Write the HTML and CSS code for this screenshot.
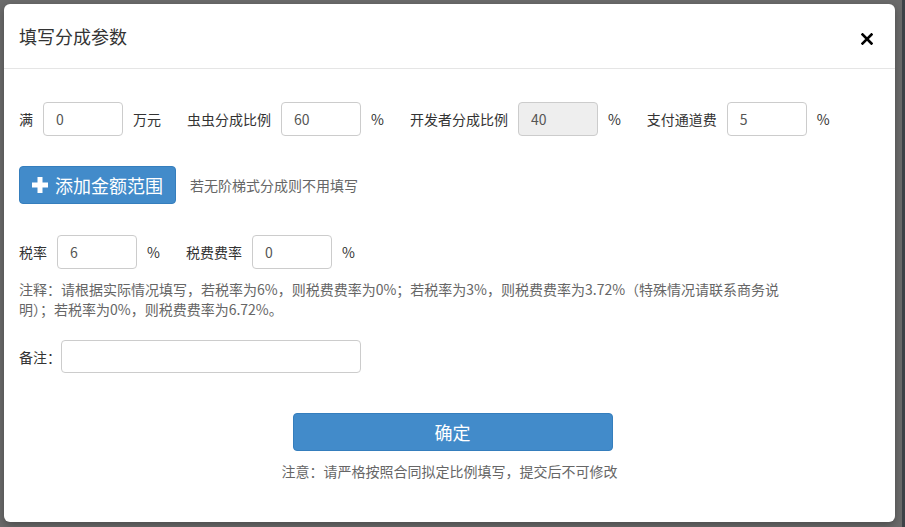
FILE: index.html
```html
<!DOCTYPE html>
<html lang="zh-CN">
<head>
    <meta charset="UTF-8">
    <meta name="viewport" content="width=device-width, initial-scale=1.0">
    <title>填写分成参数</title>
    <link rel="stylesheet" href="styles.css">
</head>
<body>

    <div class="backdrop">
        <div class="modal">
            <div class="modal-header">
                <h4 class="modal-title">填写分成参数</h4>
                <span class="close">
                    <svg width="12" height="12" viewBox="0 0 12 12">
                        <path d="M1.5 1.5 L10.5 10.5 M10.5 1.5 L1.5 10.5" stroke="#000" stroke-width="2.6" stroke-linecap="square"/>
                    </svg>
                </span>
            </div>

            <div class="modal-body">
                <div class="form-row">
                    <div class="group">
                        <span class="label">满</span>
                        <input class="form-control" type="text" value="0">
                        <span class="unit">万元</span>
                    </div>
                    <div class="group">
                        <span class="label">虫虫分成比例</span>
                        <input class="form-control" type="text" value="60">
                        <span class="unit">%</span>
                    </div>
                    <div class="group">
                        <span class="label">开发者分成比例</span>
                        <input class="form-control" type="text" value="40" disabled>
                        <span class="unit">%</span>
                    </div>
                    <div class="group">
                        <span class="label">支付通道费</span>
                        <input class="form-control" type="text" value="5">
                        <span class="unit">%</span>
                    </div>
                </div>

                <div class="form-row range-row">
                    <button class="btn btn-primary btn-add">
                        <svg class="icon-plus" width="16" height="16" viewBox="0 0 16 16">
                            <rect x="5.5" y="0" width="5" height="16" fill="#fff"/>
                            <rect x="0" y="5.5" width="16" height="5" fill="#fff"/>
                        </svg>
                        添加金额范围
                    </button>
                    <span class="hint">若无阶梯式分成则不用填写</span>
                </div>

                <div class="form-row tax-row">
                    <div class="group">
                        <span class="label">税率</span>
                        <input class="form-control" type="text" value="6">
                        <span class="unit">%</span>
                    </div>
                    <div class="group">
                        <span class="label">税费费率</span>
                        <input class="form-control" type="text" value="0">
                        <span class="unit">%</span>
                    </div>
                </div>

                <p class="note">注释：请根据实际情况填写，若税率为6%，则税费费率为0%；若税率为3%，则税费费率为3.72%（特殊情况请联系商务说明）；若税率为0%，则税费费率为6.72%。</p>

                <div class="form-row remark-row">
                    <span class="remark-label">备注：</span>
                    <input class="form-control remark-input" type="text">
                </div>

                <div class="submit">
                    <button class="btn btn-primary btn-submit">确定</button>
                    <p class="submit-tip">注意：请严格按照合同拟定比例填写，提交后不可修改</p>
                </div>
            </div>
        </div>
        <div class="page-edge"></div>
    </div>

</body>
</html>
```

FILE: styles.css
```css
body {
    margin: 0;
    font-family: "Microsoft YaHei", "Noto Sans CJK SC", "Noto Sans", sans-serif;
    font-size: 14px;
    color: #333;
    background-color: #6b6b6b;
}
.backdrop {
    display: flex;
    height: 527px;
    box-sizing: border-box;
    padding: 4px 0 5px 4px;
}
.modal {
    width: 891px;
    height: 518px;
    background-color: #fff;
    border-radius: 6px;
    box-shadow: 0 3px 9px rgba(0, 0, 0, 0.3);
}
.page-edge {
    flex: 1;
    margin-left: 7px;
    margin-top: -4px;
    margin-bottom: -5px;
    background-color: #3d4247;
}
.modal-header {
    display: flex;
    align-items: center;
    justify-content: space-between;
    height: 64px;
    padding: 0 22px 0 15px;
    border-bottom: 1px solid #e5e5e5;
}
.modal-title {
    margin: 0;
    font-size: 18px;
    font-weight: normal;
    color: #333;
}
.close {
    display: flex;
    margin-top: 6px;
    cursor: pointer;
}
.modal-body {
    padding: 33px 15px 0;
}
.form-row {
    display: flex;
    align-items: center;
}
.group {
    display: flex;
    align-items: center;
    margin-right: 26px;
}
.label {
    margin-right: 10px;
}
.unit {
    margin-left: 10px;
}
.form-control {
    box-sizing: border-box;
    width: 80px;
    height: 34px;
    padding: 6px 12px;
    font-family: inherit;
    font-size: 14px;
    color: #555;
    background-color: #fff;
    border: 1px solid #ccc;
    border-radius: 4px;
    outline: none;
}
.form-control[disabled] {
    background-color: #eee;
}
.btn {
    font-family: inherit;
    border-radius: 4px;
    cursor: pointer;
}
.btn-primary {
    color: #fff;
    background-color: #428bca;
    border: 1px solid #357ebd;
}
.range-row {
    margin-top: 30px;
}
.btn-add {
    display: flex;
    align-items: center;
    gap: 7px;
    height: 38px;
    padding: 0 12px;
    font-size: 18px;
}
.hint {
    margin-left: 14px;
    color: #666;
}
.tax-row {
    margin-top: 31px;
}
.note {
    width: 768px;
    margin: 10px 0 0;
    line-height: 20px;
    color: #666;
}
.remark-row {
    margin-top: 21px;
}
.remark-input {
    width: 300px;
    height: 33px;
}
.submit {
    margin-top: 40px;
    text-align: center;
}
.btn-submit {
    width: 320px;
    height: 38px;
    margin-left: 6px;
    font-size: 18px;
}
.submit-tip {
    margin: 10px 0 0;
    line-height: 20px;
    color: #666;
}
```
